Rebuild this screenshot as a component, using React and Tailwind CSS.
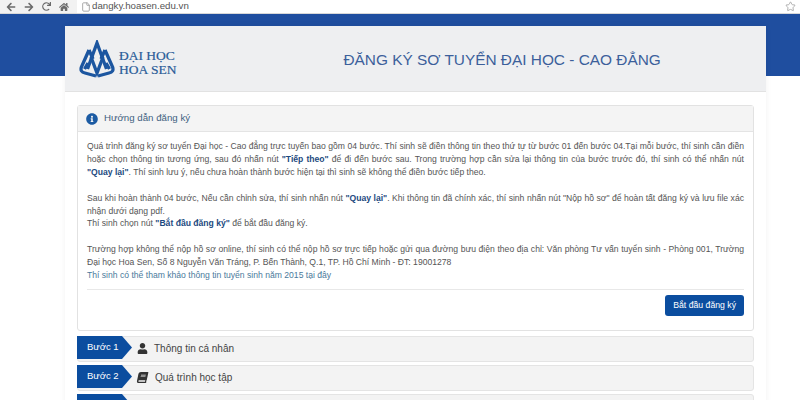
import { FaArrowLeft, FaArrowRight, FaBook, FaHome, FaInfoCircle, FaRedo, FaUser } from "react-icons/fa";
import { File, Star } from "lucide-react";

const justified = "block whitespace-nowrap [text-align-last:justify]";

function Logo() {
  return (
    <div className="flex items-center gap-[4px]">
      <svg width="36" height="38" viewBox="0 0 36 38" fill="none" stroke="#1c56a0" strokeWidth="3.3" strokeLinejoin="miter">
        <path d="M8.5 29 L18 3 L27.5 29" />
        <path d="M10 10 L2.4 27 Q0.8 32 6 33 L17 36" />
        <path d="M26 10 L33.6 27 Q35.2 32 30 33 L19 36" />
        <path d="M10 10 L14 19 M26 10 L22 19" />
        <path d="M5.5 29 L9 23 M30.5 29 L27 23" />
        <path d="M12 17 L18 33 L24 17" />
      </svg>
      <div className="mt-[8px] font-['Liberation_Serif',serif] text-[13.5px] leading-[14px] text-[#2a5c98] [-webkit-text-stroke:0.2px_#2a5c98]">
        <div>ĐẠI HỌC</div>
        <div>HOA SEN</div>
      </div>
    </div>
  );
}

function StepRow({ label, icon, text, gap }) {
  return (
    <div className="flex h-[26px] rounded-[3px] border border-[#e4e4e4] bg-[#f3f3f3]">
      <div className="-ml-px -mt-px flex h-[23px] w-[55px] items-center bg-[#0b4d9f] pl-[10px] text-[9.5px] text-white [clip-path:polygon(0_0,45px_0,55px_50%,45px_100%,0_100%)]">
        {label}
      </div>
      <div className={`ml-[5px] flex h-[24px] items-center text-[10px] text-[#444] ${gap}`}>
        {icon}
        <span>{text}</span>
      </div>
    </div>
  );
}

export default function App() {
  return (
    <div className="h-[400px] w-[800px] overflow-hidden bg-white font-['Liberation_Sans',sans-serif]">
      {/* browser toolbar */}
      <div className="flex h-[14px] items-center border-b border-[#d8d8d8] bg-[#f2f2f2] pl-[6px]">
        <div className="flex w-[71px] items-center gap-[8px] text-[#6a6a6a]">
          <FaArrowLeft size={10} />
          <FaArrowRight size={10} />
          <FaRedo size={9} />
          <FaHome size={10} />
        </div>
        <div className="flex h-[13px] flex-1 items-center gap-[1px] bg-white pl-[4px] pr-[4px] text-[9.7px] text-[#555]">
          <File size={10} className="text-[#999]" />
          <span>dangky.hoasen.edu.vn</span>
          <Star size={11} className="ml-auto text-[#aaa]" />
        </div>
      </div>

      <div className="h-[62px] bg-[#1f4e9f]" />

      {/* main card */}
      <div className="-mt-[50px] ml-[65px] w-[701px] bg-white shadow-[0_0_6px_rgba(0,0,0,0.06)]">
        <div className="flex h-[66px] items-center border-b border-[#e2e2e2] bg-[#eeeff1] pl-[14px]">
          <Logo />
          <h1 className="ml-[167px] mt-[2px] text-[15.4px] text-[#3c5f9b]">
            ĐĂNG KÝ SƠ TUYỂN ĐẠI HỌC - CAO ĐẲNG
          </h1>
        </div>

        <div className="flex flex-col gap-[3px] px-[12px] pt-[13px]">
          <div className="mb-[2px] rounded-[3px] border border-[#e2e2e2]">
            <div className="flex h-[26px] items-center gap-[6px] border-b border-[#e4e4e4] bg-[#f4f4f4] pl-[8px] text-[9.7px] text-[#3f5f7f]">
              <FaInfoCircle size={12} className="text-[#1c5ba3]" />
              <span>Hướng dẫn đăng ký</span>
            </div>
            <div className="px-[9px] pt-[8px] pb-[14px] text-[8.6px] leading-[12.9px] text-[#555]">
              <span className={justified}>
                Quá trình đăng ký sơ tuyển Đại học - Cao đẳng trực tuyến bao gồm 04 bước. Thí sinh sẽ điền thông tin theo thứ tự từ bước 01 đến bước 04.Tại mỗi bước, thí sinh cần điền
              </span>
              <span className={justified}>
                hoặc chọn thông tin tương ứng, sau đó nhấn nút <b className="text-[#1d4a80]">"Tiếp theo"</b> để đi đến bước sau. Trong trường hợp cần sửa lại thông tin của bước trước đó, thí sinh có thể nhấn nút
              </span>
              <span className="block">
                <b className="text-[#1d4a80]">"Quay lại"</b>. Thí sinh lưu ý, nếu chưa hoàn thành bước hiện tại thì sinh sẽ không thể điền bước tiếp theo.
              </span>
              <span className="block h-[12.9px]" />
              <span className={justified}>
                Sau khi hoàn thành 04 bước, Nếu cần chỉnh sửa, thí sinh nhấn nút <b className="text-[#1d4a80]">"Quay lại"</b>. Khi thông tin đã chính xác, thí sinh nhấn nút "Nộp hồ sơ" để hoàn tất đăng ký và lưu file xác
              </span>
              <span className="block">nhận dưới dạng pdf.</span>
              <span className="block">
                Thí sinh chọn nút <b className="text-[#1d4a80]">"Bắt đầu đăng ký"</b> để bắt đầu đăng ký.
              </span>
              <span className="block h-[12.9px]" />
              <span className={justified}>
                Trường hợp không thể nộp hồ sơ online, thí sinh có thể nộp hồ sơ trực tiếp hoặc gửi qua đường bưu điện theo địa chỉ: Văn phòng Tư vấn tuyển sinh - Phòng 001, Trường
              </span>
              <span className="block">
                Đại học Hoa Sen, Số 8 Nguyễn Văn Tráng, P. Bến Thành, Q.1, TP. Hồ Chí Minh - ĐT: 19001278
              </span>
              <span className="block text-[#4a7a9c]">
                Thí sinh có thể tham khảo thông tin tuyển sinh năm 2015 tại đây
              </span>
              <div className="mt-[7px] flex justify-end border-t border-[#e8e8e8] pt-[5px]">
                <button className="h-[21px] rounded-[3px] bg-[#0b4d9f] px-[8px] text-[8.7px] text-white">
                  Bắt đầu đăng ký
                </button>
              </div>
            </div>
          </div>

          <StepRow
            label="Bước 1"
            text="Thông tin cá nhân"
            gap="gap-[6px]"
            icon={<FaUser size={11} className="text-[#333]" />}
          />
          <StepRow
            label="Bước 2"
            text="Quá trình học tập"
            gap="gap-[7px]"
            icon={<FaBook size={11} className="-skew-x-12 text-[#333]" />}
          />
          <StepRow label="" text="" gap="" icon={null} />
        </div>
      </div>
    </div>
  );
}
